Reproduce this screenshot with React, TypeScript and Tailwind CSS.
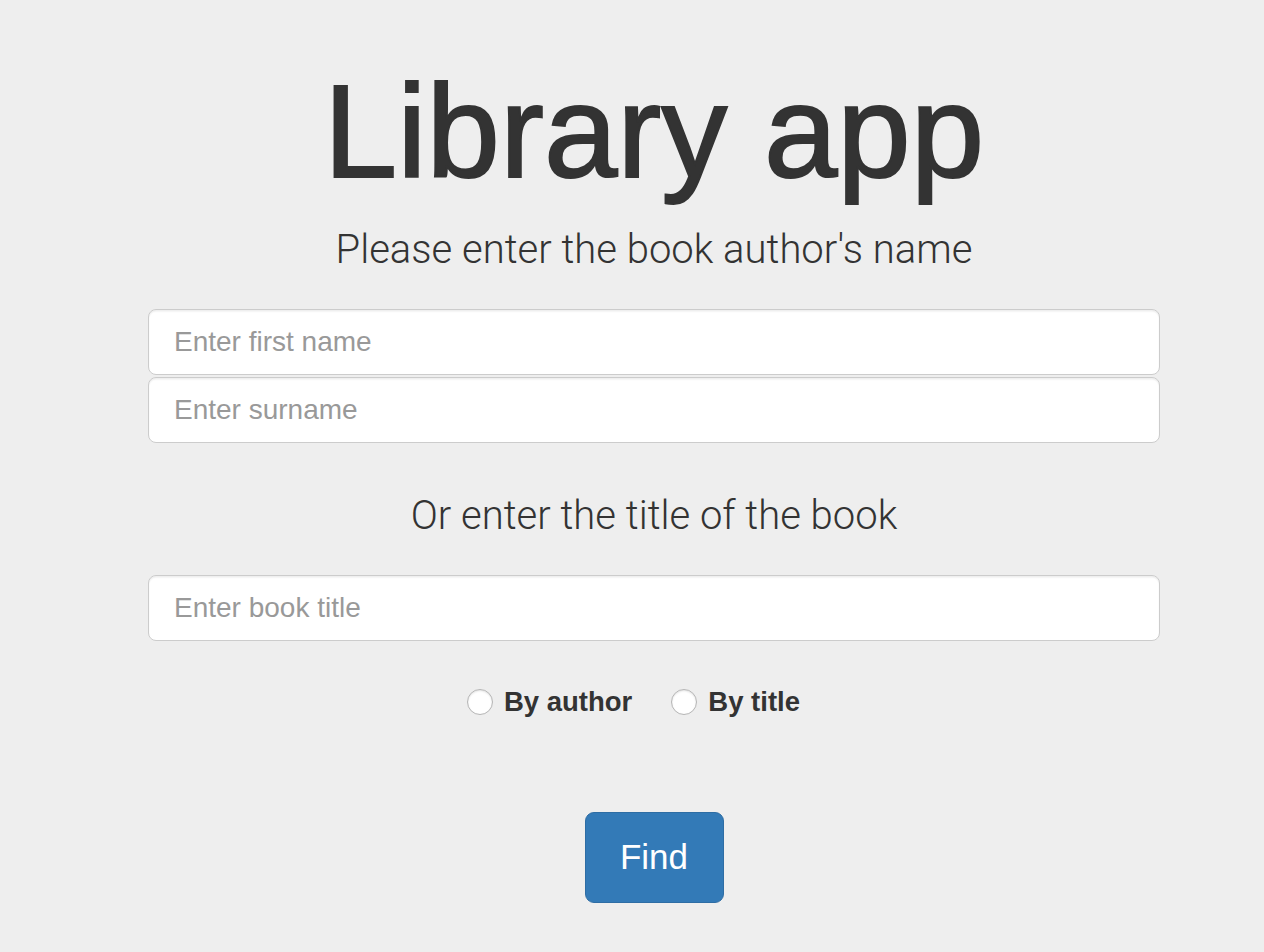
import { useState } from "react";

const inputCls =
    "block w-full h-[66px] px-[25px] bg-white border border-[#cccccc] rounded-[8px] text-[28px] text-[#555] placeholder:text-[#999] shadow-[inset_0_1.5px_1.5px_rgba(0,0,0,0.075)] outline-none";

const RadioOption = ({ label, checked, onSelect }: { label: string; checked: boolean; onSelect: () => void }) => (
    <label className="flex items-center gap-x-[11px] cursor-pointer" onClick={onSelect}>
        <span className="w-[26px] h-[26px] rounded-full bg-white border border-[#b5b5b5] shadow-[inset_0_1px_2px_rgba(0,0,0,0.12)] flex items-center justify-center">
            {checked && <span className="w-[12px] h-[12px] rounded-full bg-[#337ab7]" />}
        </span>
        <span className="text-[27.5px] font-bold leading-[30px] text-[#333]">{label}</span>
    </label>
);

export default function App() {
    const [searchBy, setSearchBy] = useState<"author" | "title" | null>(null);

    return (
        <div className="min-h-screen bg-[#eeeeee] pl-[44px] font-['Liberation_Sans',Arial,sans-serif] text-[#333]">
            <div className="mx-auto w-[1012px] flex flex-col">
                {/* heading */}
                <h1 className="mt-[66px] text-center text-[132px] leading-[132px] font-normal [-webkit-text-stroke:2px_#333]">
                    Library app
                </h1>
                <p className="mt-[32px] text-center text-[40px] leading-[40px] font-light font-['Roboto',sans-serif]">
                    Please enter the book author's name
                </p>

                {/* author inputs */}
                <div className="mt-[39px] flex flex-col gap-y-[2px]">
                    <input className={inputCls} placeholder="Enter first name" />
                    <input className={inputCls} placeholder="Enter surname" />
                </div>

                <p className="mt-[53px] text-center text-[40px] leading-[40px] font-light font-['Roboto',sans-serif]">
                    Or enter the title of the book
                </p>

                <div className="mt-[39px]">
                    <input className={inputCls} placeholder="Enter book title" />
                </div>

                {/* search type */}
                <div className="mt-[46px] pr-[41px] flex justify-center gap-x-[39px]">
                    <RadioOption label="By author" checked={searchBy === "author"} onSelect={() => setSearchBy("author")} />
                    <RadioOption label="By title" checked={searchBy === "title"} onSelect={() => setSearchBy("title")} />
                </div>

                <div className="mt-[95px] flex justify-center">
                    <button className="w-[139px] h-[91px] rounded-[9px] bg-[#337ab7] border border-[#2e6da4] text-white text-[35px]">
                        Find
                    </button>
                </div>
            </div>
        </div>
    );
}
